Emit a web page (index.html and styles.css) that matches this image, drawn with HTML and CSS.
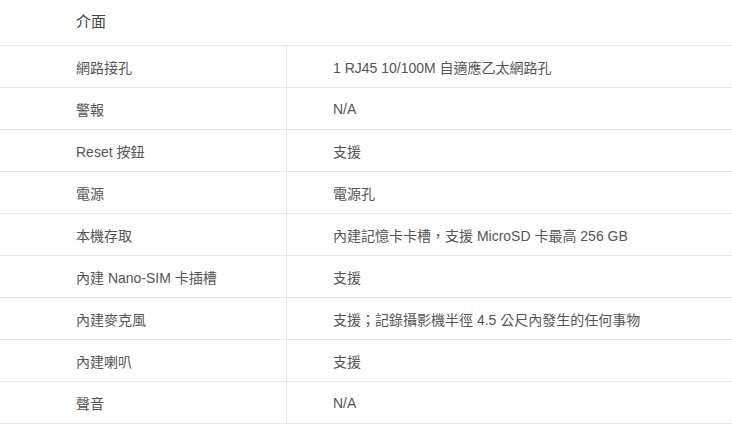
FILE: index.html
```html
<!DOCTYPE html>
<html lang="zh-Hant">
<head>
<meta charset="utf-8">
<link rel="stylesheet" href="styles.css">
</head>
<body>
<section class="spec">
  <h3 class="spec-title">介面</h3>
  <table class="spec-table">
    <tr><th>網路接孔</th><td>1 RJ45 10/100M 自適應乙太網路孔</td></tr>
    <tr><th>警報</th><td>N/A</td></tr>
    <tr><th>Reset 按鈕</th><td>支援</td></tr>
    <tr><th>電源</th><td>電源孔</td></tr>
    <tr><th>本機存取</th><td>內建記憶卡卡槽，支援 MicroSD 卡最高 256 GB</td></tr>
    <tr><th>內建 Nano-SIM 卡插槽</th><td>支援</td></tr>
    <tr><th>內建麥克風</th><td>支援；記錄攝影機半徑 4.5 公尺內發生的任何事物</td></tr>
    <tr><th>內建喇叭</th><td>支援</td></tr>
    <tr><th>聲音</th><td>N/A</td></tr>
  </table>
</section>
</body>
</html>
```

FILE: styles.css
```css
html, body {
  margin: 0;
  padding: 0;
  background: #fff;
}
body {
  font-family: "Liberation Sans", Arial, "Noto Sans CJK TC", sans-serif;
  color: #555;
}
.spec-title {
  margin: 0;
  height: 46px;
  box-sizing: border-box;
  padding-left: 76px;
  line-height: 44px;
  font-size: 15px;
  font-weight: normal;
  color: #444;
  border-bottom: 1px solid #e6e6e6;
}
.spec-table {
  width: 100%;
  border-collapse: collapse;
  font-size: 14px;
}
.spec-table th,
.spec-table td {
  height: 41px;
  padding: 0;
  text-align: left;
  font-weight: normal;
  border-bottom: 1px solid #e6e6e6;
  vertical-align: middle;
}
.spec-table th {
  width: 210px;
  padding-left: 76px;
  border-right: 1px solid #e3e3e8;
}
.spec-table td {
  padding-left: 46px;
}
```
